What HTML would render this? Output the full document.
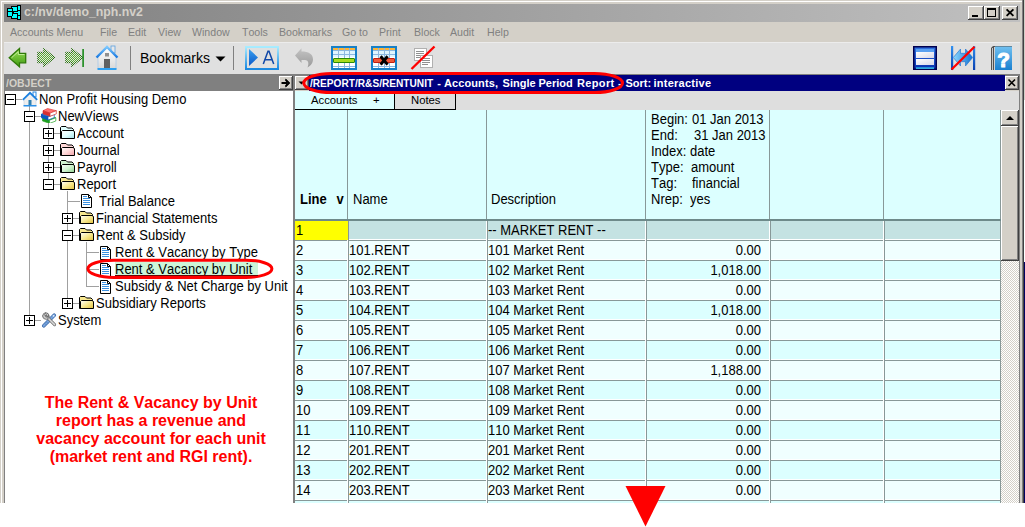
<!DOCTYPE html><html><head><meta charset="utf-8"><style>
html,body{margin:0;padding:0;}body{width:1025px;height:527px;overflow:hidden;position:relative;background:#fff;font-family:"Liberation Sans",sans-serif;font-kerning:none;}
body>div{position:absolute;}
</style></head><body>
<div style="left:0px;top:0px;width:1024px;height:503px;background:#d4d0c8"></div>
<div style="left:1px;top:1px;width:1021px;height:1px;background:#fff"></div>
<div style="left:1px;top:1px;width:1px;height:502px;background:#fff"></div>
<div style="left:1022px;top:0px;width:1px;height:503px;background:#808080"></div>
<div style="left:1023px;top:0px;width:1px;height:503px;background:#404040"></div>
<div style="left:1024px;top:0px;width:1px;height:100px;background:#d4d0c8"></div>
<div style="left:1024px;top:100px;width:1px;height:162px;background:#ffffff"></div>
<div style="left:1024px;top:262px;width:1px;height:241px;background:#000060"></div>
<div style="left:4px;top:4px;width:1016px;height:18px;background:linear-gradient(to right,#808080,#c0c0c0)"></div>
<svg style="position:absolute;left:7px;top:5px;" width="15" height="16" viewBox="0 0 15 16"><g shape-rendering="crispEdges"><rect x="0" y="3" width="6" height="4" fill="#000"/><rect x="0" y="6" width="6" height="6" fill="#000"/><rect x="4" y="1" width="7" height="3" fill="#000"/><rect x="5" y="2" width="6" height="5" fill="#000"/><rect x="5" y="8" width="6" height="4" fill="#000"/><rect x="4" y="10" width="7" height="4" fill="#000"/><rect x="10" y="0" width="4" height="6" fill="#000"/><rect x="10" y="5" width="4" height="6" fill="#000"/><rect x="6" y="6" width="6" height="3" fill="#000"/><rect x="10" y="10" width="4" height="5" fill="#000"/><rect x="1" y="4" width="4" height="2" fill="#00ffff"/><rect x="1" y="7" width="4" height="4" fill="#00ffff"/><rect x="5" y="2" width="5" height="1" fill="#00ffff"/><rect x="6" y="3" width="4" height="3" fill="#00ffff"/><rect x="6" y="9" width="4" height="2" fill="#00ffff"/><rect x="5" y="11" width="5" height="2" fill="#00ffff"/><rect x="11" y="1" width="2" height="4" fill="#00ffff"/><rect x="11" y="6" width="2" height="4" fill="#00ffff"/><rect x="7" y="7" width="4" height="1" fill="#00ffff"/><rect x="11" y="11" width="2" height="3" fill="#00ffff"/></g></svg>
<div style="left:24px;top:5.24px;line-height:15px;font-size:12.3px;font-weight:bold;color:#d4d0c8;white-space:pre;">c:/nv/demo_nph.nv2</div>
<div style="left:968px;top:6px;width:16px;height:14px;background:#d4d0c8;box-shadow:inset -1px -1px #404040, inset 1px 1px #ffffff, inset -2px -2px #808080, inset 2px 2px #d4d0c8;"></div>
<div style="left:984px;top:6px;width:16px;height:14px;background:#d4d0c8;box-shadow:inset -1px -1px #404040, inset 1px 1px #ffffff, inset -2px -2px #808080, inset 2px 2px #d4d0c8;"></div>
<div style="left:1002px;top:6px;width:16px;height:14px;background:#d4d0c8;box-shadow:inset -1px -1px #404040, inset 1px 1px #ffffff, inset -2px -2px #808080, inset 2px 2px #d4d0c8;"></div>
<svg style="position:absolute;left:968px;top:6px;" width="16" height="14" viewBox="0 0 16 14"><rect x="4" y="9" width="6" height="2" fill="#000"/></svg>
<svg style="position:absolute;left:984px;top:6px;" width="16" height="14" viewBox="0 0 16 14"><g shape-rendering="crispEdges" fill="#000"><rect x="3" y="2" width="9" height="2"/><rect x="3" y="2" width="1" height="9"/><rect x="11" y="2" width="1" height="9"/><rect x="3" y="10" width="9" height="1"/></g></svg>
<svg style="position:absolute;left:1002px;top:6px;" width="16" height="14" viewBox="0 0 16 14"><path d="M4.6 3.4 L11.4 9.9 M11.4 3.4 L4.6 9.9" stroke="#000" stroke-width="1.9"/></svg>
<div style="left:10px;top:25.83px;line-height:13px;font-size:10.6px;font-weight:normal;color:#808080;white-space:pre;">Accounts Menu</div>
<div style="left:100px;top:25.83px;line-height:13px;font-size:10.6px;font-weight:normal;color:#808080;white-space:pre;">File</div>
<div style="left:128px;top:25.83px;line-height:13px;font-size:10.6px;font-weight:normal;color:#808080;white-space:pre;">Edit</div>
<div style="left:158px;top:25.83px;line-height:13px;font-size:10.6px;font-weight:normal;color:#808080;white-space:pre;">View</div>
<div style="left:192px;top:25.83px;line-height:13px;font-size:10.6px;font-weight:normal;color:#808080;white-space:pre;">Window</div>
<div style="left:242px;top:25.83px;line-height:13px;font-size:10.6px;font-weight:normal;color:#808080;white-space:pre;">Tools</div>
<div style="left:279px;top:25.83px;line-height:13px;font-size:10.6px;font-weight:normal;color:#808080;white-space:pre;">Bookmarks</div>
<div style="left:342px;top:25.83px;line-height:13px;font-size:10.6px;font-weight:normal;color:#808080;white-space:pre;">Go to</div>
<div style="left:379px;top:25.83px;line-height:13px;font-size:10.6px;font-weight:normal;color:#808080;white-space:pre;">Print</div>
<div style="left:414px;top:25.83px;line-height:13px;font-size:10.6px;font-weight:normal;color:#808080;white-space:pre;">Block</div>
<div style="left:450px;top:25.83px;line-height:13px;font-size:10.6px;font-weight:normal;color:#808080;white-space:pre;">Audit</div>
<div style="left:487px;top:25.83px;line-height:13px;font-size:10.6px;font-weight:normal;color:#808080;white-space:pre;">Help</div>
<div style="left:4px;top:42px;width:1016px;height:32px;background:#e0e0e0"></div>
<div style="left:4px;top:42px;width:1016px;height:1px;background:#ececec"></div>
<svg style="position:absolute;left:8px;top:47px;" width="20" height="22" viewBox="0 0 20 22"><defs><linearGradient id="gb" x1="0" y1="0" x2="0" y2="1"><stop offset="0" stop-color="#9be05a"/><stop offset="1" stop-color="#3f9a10"/></linearGradient></defs>
<path d="M1.2 10.8 L11.5 1.5 L11.5 6.3 L17.7 6.3 L17.7 15.8 L11.5 15.8 L11.5 19.8 Z" fill="url(#gb)" stroke="#2f7a08" stroke-width="1.3" stroke-linejoin="miter"/>
<path d="M3.5 10.8 L10.3 4.6 L10.3 7.5 L16.4 7.5" fill="none" stroke="#c6f0a0" stroke-width="0.9"/></svg>
<svg style="position:absolute;left:37px;top:48px;" width="20" height="20" viewBox="0 0 20 20"><defs><pattern id="dp1" width="2" height="2" patternUnits="userSpaceOnUse"><rect x="0" y="0" width="1" height="1" fill="#58b030"/><rect x="1" y="1" width="1" height="1" fill="#58b030"/></pattern>
<pattern id="do1" width="2" height="2" patternUnits="userSpaceOnUse"><rect x="0" y="0" width="1" height="1" fill="#2a7010"/><rect x="1" y="1" width="1" height="1" fill="#2a7010"/></pattern></defs><path d="M1 4.5 L7 4.5 L7 1 L17.5 9.5 L7 18 L7 14.5 L1 14.5 Z" fill="url(#dp1)" stroke="url(#do1)" stroke-width="1.6"/></svg>
<svg style="position:absolute;left:65px;top:48px;" width="20" height="20" viewBox="0 0 20 20"><defs><pattern id="dp2" width="2" height="2" patternUnits="userSpaceOnUse"><rect x="0" y="0" width="1" height="1" fill="#58b030"/><rect x="1" y="1" width="1" height="1" fill="#58b030"/></pattern>
<pattern id="do2" width="2" height="2" patternUnits="userSpaceOnUse"><rect x="0" y="0" width="1" height="1" fill="#2a7010"/><rect x="1" y="1" width="1" height="1" fill="#2a7010"/></pattern></defs><path d="M1 4.5 L7 4.5 L7 1 L17.5 9.5 L7 18 L7 14.5 L1 14.5 Z" fill="url(#dp2)" stroke="url(#do2)" stroke-width="1.6"/><rect x="17.3" y="1" width="1.6" height="18" fill="#1a8a1a"/></svg>
<svg style="position:absolute;left:95px;top:45px;" width="24" height="26" viewBox="0 0 24 26"><defs><linearGradient id="hb" x1="0" y1="0" x2="0" y2="1"><stop offset="0" stop-color="#ffffff"/><stop offset="1" stop-color="#d8d8d8"/></linearGradient>
<linearGradient id="hr" x1="0" y1="0" x2="0" y2="1"><stop offset="0" stop-color="#7cc8ff"/><stop offset="1" stop-color="#1878e0"/></linearGradient></defs>
<rect x="16" y="1" width="4" height="7" fill="#e8e8e8" stroke="#5aa0e0" stroke-width="0.8"/>
<path d="M3 12 L12 3 L21 12 L21 24 L3 24 Z" fill="url(#hb)" stroke="#a8c8e8" stroke-width="0.8"/>
<path d="M1.5 12.5 L12 2 L22.5 12.5" fill="none" stroke="url(#hr)" stroke-width="2.4"/>
<rect x="10" y="8" width="4" height="3.5" fill="#909090"/>
<rect x="9" y="14" width="6" height="10" fill="#606060"/>
<rect x="2.5" y="23" width="19" height="2" fill="#30a0f0"/></svg>
<div style="left:130px;top:46px;width:1px;height:24px;background:#808080"></div>
<div style="left:233px;top:46px;width:1px;height:24px;background:#808080"></div>
<div style="left:140px;top:49.65px;line-height:17px;font-size:14px;font-weight:normal;color:#000;white-space:pre;">Bookmarks</div>
<svg style="position:absolute;left:215px;top:56px;" width="11" height="6" viewBox="0 0 11 6"><path d="M0.5 0.5 L10.5 0.5 L5.5 5.5 Z" fill="#000"/></svg>
<svg style="position:absolute;left:244px;top:45px;" width="37" height="26" viewBox="0 0 37 26"><defs><linearGradient id="ab" x1="0" y1="0" x2="0" y2="1"><stop offset="0" stop-color="#a8ecff"/><stop offset="1" stop-color="#1a88e0"/></linearGradient>
<linearGradient id="at" x1="0" y1="0" x2="0" y2="1"><stop offset="0" stop-color="#3aa0f0"/><stop offset="1" stop-color="#0a58c8"/></linearGradient></defs>
<rect x="2" y="2" width="32" height="22" fill="#e0e0e0" stroke="url(#ab)" stroke-width="2"/>
<path d="M5 4 L14 12.5 L5 21 Z" fill="url(#at)"/>
<path d="M19.3 19 L24 6.2 L25 6.2 L29.7 19 M20.8 14.8 L28.2 14.8" fill="none" stroke="#1048a8" stroke-width="1.5"/></svg>
<svg style="position:absolute;left:293px;top:47px;" width="22" height="22" viewBox="0 0 22 22"><defs><linearGradient id="ug" x1="0" y1="0" x2="0" y2="1"><stop offset="0" stop-color="#c4c4c4"/><stop offset="1" stop-color="#9a9a9a"/></linearGradient></defs>
<path d="M2 8.5 L8.5 1.3 L8.5 4.6 C15.5 4.6 20 7 20 12.5 C20 16 17.5 19 14.5 20.5 C16 17 15.8 13.3 12 13 L8.5 13 L8.5 16 Z" fill="url(#ug)"/></svg>
<svg style="position:absolute;left:331px;top:46px;" width="26" height="24" viewBox="0 0 26 24"><rect x="1" y="1" width="24" height="22" fill="#fff" stroke="#1680c8" stroke-width="2"/>
<rect x="2" y="2" width="22" height="2" fill="#fbb43a"/>
<rect x="2" y="4" width="22" height="7" fill="#e0f6ff"/>
<g fill="#8cb8e0"><rect x="7" y="2" width="1" height="20"/><rect x="13" y="2" width="1" height="20"/><rect x="18" y="2" width="1" height="20"/>
<rect x="2" y="4" width="22" height="1"/><rect x="2" y="8" width="22" height="1"/><rect x="2" y="20" width="22" height="1"/></g><rect x="2.5" y="12.5" width="21" height="4" rx="0.5" fill="#a8dc20" stroke="#2a8a08" stroke-width="1"/></svg>
<svg style="position:absolute;left:371px;top:46px;" width="26" height="24" viewBox="0 0 26 24"><rect x="1" y="1" width="24" height="22" fill="#fff" stroke="#1680c8" stroke-width="2"/>
<rect x="2" y="2" width="22" height="2" fill="#fbb43a"/>
<rect x="2" y="4" width="22" height="7" fill="#e0f6ff"/>
<g fill="#8cb8e0"><rect x="7" y="2" width="1" height="20"/><rect x="13" y="2" width="1" height="20"/><rect x="18" y="2" width="1" height="20"/>
<rect x="2" y="4" width="22" height="1"/><rect x="2" y="8" width="22" height="1"/><rect x="2" y="20" width="22" height="1"/></g><rect x="2.5" y="12.5" width="21" height="4" rx="0.5" fill="#f05838" stroke="#c02010" stroke-width="1"/><path d="M9.6 10.3 L16.6 18.6 M16.6 10.3 L9.6 18.6" stroke="#000" stroke-width="3"/></svg>
<svg style="position:absolute;left:410px;top:45px;" width="26" height="26" viewBox="0 0 26 26"><rect x="4.5" y="3.5" width="12" height="12" fill="#fff" stroke="#b0b0b0"/>
<g fill="#909090"><rect x="6" y="6" width="8" height="1"/><rect x="6" y="8" width="8" height="1"/><rect x="6" y="10" width="8" height="1"/><rect x="6" y="12" width="6" height="1"/></g>
<rect x="10.5" y="10.5" width="12" height="12" fill="#fff" stroke="#b0b0b0"/>
<g fill="#909090"><rect x="12" y="13" width="8" height="1"/><rect x="12" y="15" width="8" height="1"/><rect x="12" y="17" width="8" height="1"/><rect x="12" y="19" width="6" height="1"/></g>
<path d="M1.5 24 L24.5 1.5" stroke="#ff0000" stroke-width="2.4"/></svg>
<svg style="position:absolute;left:913px;top:46px;" width="25" height="25" viewBox="0 0 25 25"><defs><linearGradient id="wg" x1="0" y1="0" x2="0" y2="1"><stop offset="0" stop-color="#3070e0"/><stop offset="1" stop-color="#0830b0"/></linearGradient>
<linearGradient id="wp" x1="0" y1="0" x2="1" y2="1"><stop offset="0" stop-color="#ffffff"/><stop offset="1" stop-color="#d8d8e8"/></linearGradient></defs>
<rect x="0" y="0" width="24" height="24" fill="#000050"/>
<rect x="1.5" y="1.5" width="21" height="21" fill="url(#wg)"/>
<rect x="3" y="3" width="18" height="3" fill="#5aa0f0"/>
<rect x="3" y="6" width="18" height="6" fill="url(#wp)"/>
<rect x="3" y="13" width="18" height="6" fill="url(#wp)"/>
<rect x="3" y="21.5" width="18" height="1.2" fill="#40e8ff"/></svg>
<svg style="position:absolute;left:950px;top:46px;" width="26" height="25" viewBox="0 0 26 25"><defs><linearGradient id="ar" x1="0" y1="0" x2="1" y2="0"><stop offset="0" stop-color="#8cd8ff"/><stop offset="1" stop-color="#1070d0"/></linearGradient>
<linearGradient id="bv" x1="0" y1="0" x2="0" y2="1"><stop offset="0" stop-color="#3090f0"/><stop offset="1" stop-color="#0a40b0"/></linearGradient></defs>
<rect x="1" y="0" width="2.2" height="24" fill="url(#bv)"/>
<rect x="23" y="0" width="2.2" height="24" fill="url(#bv)"/>
<path d="M3.3 11.5 L10.5 3 L10.5 7.3 L15.5 7.3 L15.5 3 L22.7 11.5 L15.5 20 L15.5 15.7 L10.5 15.7 L10.5 20 Z" fill="url(#ar)" stroke="#1a70d0" stroke-width="0.6"/>
<path d="M1.5 23.5 L24.5 0.8" stroke="#ff0000" stroke-width="2.3"/></svg>
<svg style="position:absolute;left:990px;top:46px;" width="23" height="25" viewBox="0 0 23 25"><defs><linearGradient id="hbk" x1="0" y1="0" x2="0" y2="1"><stop offset="0" stop-color="#70c0f0"/><stop offset="1" stop-color="#1a80d0"/></linearGradient></defs>
<path d="M1 2 L3 0 L22 0 L22 24 L1 24 Z" fill="#505050"/>
<rect x="2" y="2" width="1" height="22" fill="#c8c8c8"/>
<rect x="4" y="1" width="1" height="23" fill="#d0d0d0"/>
<rect x="5" y="0.5" width="17" height="23.5" fill="url(#hbk)"/>
<text x="13.6" y="20.8" text-anchor="middle" font-family="Liberation Sans" font-weight="bold" font-size="20.5" fill="#fff" stroke="#fff" stroke-width="1.2">?</text></svg>
<div style="left:4px;top:74px;width:289px;height:17px;background:#808080"></div>
<div style="left:5.5px;top:76.69px;line-height:13px;font-size:11px;font-weight:bold;color:#d4d0c8;white-space:pre;transform:scaleX(0.95);transform-origin:0 0;">/OBJECT</div>
<div style="left:279px;top:76px;width:14px;height:14px;background:#d4d0c8;box-shadow:inset -1px -1px #404040, inset 1px 1px #ffffff, inset -2px -2px #808080, inset 2px 2px #d4d0c8;"></div>
<svg style="position:absolute;left:279px;top:76px;" width="14" height="14" viewBox="0 0 14 14"><path d="M2.5 7 L8 7" stroke="#000" stroke-width="2"/><path d="M6.5 2.5 L11 7 L6.5 11.5 L6.5 9 L8.5 7 L6.5 5 Z" fill="#000"/><path d="M6.5 3.5 L10 7 L6.5 10.5" stroke="#000" stroke-width="1.6" fill="none"/></svg>
<div style="left:4px;top:91px;width:1px;height:412px;background:#808080"></div>
<div style="left:5px;top:91px;width:288px;height:412px;background:#fff"></div>
<div style="left:293px;top:74px;width:2px;height:429px;background:#808080"></div>
<div style="left:29px;top:106px;width:1px;height:215px;background:#a0a0a0"></div>
<div style="left:48px;top:123px;width:1px;height:62px;background:#a0a0a0"></div>
<div style="left:67px;top:191px;width:1px;height:113px;background:#a0a0a0"></div>
<div style="left:86px;top:242px;width:1px;height:45px;background:#a0a0a0"></div>
<div style="left:16px;top:99px;width:6px;height:1px;background:#a0a0a0"></div>
<div style="left:35px;top:116px;width:6px;height:1px;background:#a0a0a0"></div>
<div style="left:35px;top:320px;width:6px;height:1px;background:#a0a0a0"></div>
<div style="left:54px;top:133px;width:6px;height:1px;background:#a0a0a0"></div>
<div style="left:54px;top:150px;width:6px;height:1px;background:#a0a0a0"></div>
<div style="left:54px;top:167px;width:6px;height:1px;background:#a0a0a0"></div>
<div style="left:54px;top:184px;width:6px;height:1px;background:#a0a0a0"></div>
<div style="left:68px;top:201px;width:12px;height:1px;background:#a0a0a0"></div>
<div style="left:73px;top:218px;width:6px;height:1px;background:#a0a0a0"></div>
<div style="left:73px;top:235px;width:6px;height:1px;background:#a0a0a0"></div>
<div style="left:73px;top:303px;width:6px;height:1px;background:#a0a0a0"></div>
<div style="left:87px;top:252px;width:12px;height:1px;background:#a0a0a0"></div>
<div style="left:87px;top:269px;width:12px;height:1px;background:#a0a0a0"></div>
<div style="left:87px;top:286px;width:12px;height:1px;background:#a0a0a0"></div>
<svg style="position:absolute;left:5px;top:94px;" width="11" height="11" viewBox="0 0 11 11"><rect x="0.5" y="0.5" width="10" height="10" fill="#fff" stroke="#000"/><rect x="2" y="5" width="7" height="1" fill="#000"/></svg>
<svg style="position:absolute;left:22px;top:91px;" width="17" height="16" viewBox="0 0 17 16"><rect x="11" y="1" width="3" height="5" fill="#fff" stroke="#2a88e0" stroke-width="1"/>
<path d="M2 8 L8 2.5 L14 8 L14 14.5 L2 14.5 Z" fill="#eee" stroke="#c0d0e0" stroke-width="0.6"/>
<path d="M0.8 8.8 L8 1.8 L15.2 8.8" fill="none" stroke="#1a80e0" stroke-width="1.8"/>
<rect x="6.5" y="9" width="3" height="5.5" fill="#3080b0"/>
<rect x="1.5" y="14" width="13" height="1.5" fill="#2a90e8"/></svg>
<div style="left:39px;top:91.50px;line-height:16px;font-size:13px;font-weight:normal;color:#000;white-space:pre;transform:scaleY(1.08);transform-origin:0 12.50px;">Non Profit Housing Demo</div>
<svg style="position:absolute;left:24px;top:111px;" width="11" height="11" viewBox="0 0 11 11"><rect x="0.5" y="0.5" width="10" height="10" fill="#fff" stroke="#000"/><rect x="2" y="5" width="7" height="1" fill="#000"/></svg>
<svg style="position:absolute;left:41px;top:108px;" width="16" height="15" viewBox="0 0 16 15"><path d="M1.5 9.8 L6.0 7.6 L14.8 9.8 L8.5 12.2 Z" fill="#50e050" stroke="#20a020" stroke-width="0.6"/><path d="M1.5 9.8 L8.5 12.2 L8.5 15.4 L1.5 13.0 Z" fill="#20a020" stroke="#20a020" stroke-width="0.6"/><path d="M8.5 12.2 L14.8 9.8 L14.8 13.0 L8.5 15.4 Z" fill="#fff" stroke="#20a020" stroke-width="0.7"/><path d="M0.0 6.4 L4.5 4.2 L13.3 6.4 L7.0 8.8 Z" fill="#2a80f0" stroke="#0a58c0" stroke-width="0.6"/><path d="M0.0 6.4 L7.0 8.8 L7.0 12.0 L0.0 9.6 Z" fill="#0a58c0" stroke="#0a58c0" stroke-width="0.6"/><path d="M7.0 8.8 L13.3 6.4 L13.3 9.6 L7.0 12.0 Z" fill="#fff" stroke="#0a58c0" stroke-width="0.7"/><path d="M2.0 2.7 L6.5 0.5 L15.3 2.7 L9.0 5.1 Z" fill="#ff7070" stroke="#d83030" stroke-width="0.6"/><path d="M2.0 2.7 L9.0 5.1 L9.0 8.3 L2.0 5.9 Z" fill="#d83030" stroke="#d83030" stroke-width="0.6"/><path d="M9.0 5.1 L15.3 2.7 L15.3 5.9 L9.0 8.3 Z" fill="#fff" stroke="#d83030" stroke-width="0.7"/></svg>
<div style="left:58px;top:108.50px;line-height:16px;font-size:13px;font-weight:normal;color:#000;white-space:pre;transform:scaleY(1.08);transform-origin:0 12.50px;">NewViews</div>
<svg style="position:absolute;left:43px;top:128px;" width="11" height="11" viewBox="0 0 11 11"><rect x="0.5" y="0.5" width="10" height="10" fill="#fff" stroke="#000"/><rect x="2" y="5" width="7" height="1" fill="#000"/><rect x="5" y="2" width="1" height="7" fill="#000"/></svg>
<svg style="position:absolute;left:60px;top:126px;" width="15" height="13" viewBox="0 0 15 13"><defs><linearGradient id="f60126" x1="0" y1="0" x2="1" y2="1"><stop offset="0" stop-color="#fff"/><stop offset="0.5" stop-color="#e0ffff"/><stop offset="1" stop-color="#a0e0e8"/></linearGradient></defs>
<path d="M0.5 1.5 L1.5 0.5 L6 0.5 L7.5 2 L12 2 L13.5 3.5 L13.5 12.5 L0.5 12.5 Z" fill="#e0ffff" stroke="#000" stroke-width="1"/>
<path d="M2.5 4.5 L13 4.5 L14.5 5.5 L14.5 12.5 L1.5 12.5 L1.5 5.5 Z" fill="url(#f60126)" stroke="#000" stroke-width="1"/></svg>
<div style="left:77px;top:125.50px;line-height:16px;font-size:13px;font-weight:normal;color:#000;white-space:pre;transform:scaleY(1.08);transform-origin:0 12.50px;">Account</div>
<svg style="position:absolute;left:43px;top:145px;" width="11" height="11" viewBox="0 0 11 11"><rect x="0.5" y="0.5" width="10" height="10" fill="#fff" stroke="#000"/><rect x="2" y="5" width="7" height="1" fill="#000"/><rect x="5" y="2" width="1" height="7" fill="#000"/></svg>
<svg style="position:absolute;left:60px;top:143px;" width="15" height="13" viewBox="0 0 15 13"><defs><linearGradient id="f60143" x1="0" y1="0" x2="1" y2="1"><stop offset="0" stop-color="#fff"/><stop offset="0.5" stop-color="#ffd8d8"/><stop offset="1" stop-color="#f0a0a8"/></linearGradient></defs>
<path d="M0.5 1.5 L1.5 0.5 L6 0.5 L7.5 2 L12 2 L13.5 3.5 L13.5 12.5 L0.5 12.5 Z" fill="#ffd8d8" stroke="#000" stroke-width="1"/>
<path d="M2.5 4.5 L13 4.5 L14.5 5.5 L14.5 12.5 L1.5 12.5 L1.5 5.5 Z" fill="url(#f60143)" stroke="#000" stroke-width="1"/></svg>
<div style="left:77px;top:142.50px;line-height:16px;font-size:13px;font-weight:normal;color:#000;white-space:pre;transform:scaleY(1.08);transform-origin:0 12.50px;">Journal</div>
<svg style="position:absolute;left:43px;top:162px;" width="11" height="11" viewBox="0 0 11 11"><rect x="0.5" y="0.5" width="10" height="10" fill="#fff" stroke="#000"/><rect x="2" y="5" width="7" height="1" fill="#000"/><rect x="5" y="2" width="1" height="7" fill="#000"/></svg>
<svg style="position:absolute;left:60px;top:160px;" width="15" height="13" viewBox="0 0 15 13"><defs><linearGradient id="f60160" x1="0" y1="0" x2="1" y2="1"><stop offset="0" stop-color="#fff"/><stop offset="0.5" stop-color="#d0f4d0"/><stop offset="1" stop-color="#90d090"/></linearGradient></defs>
<path d="M0.5 1.5 L1.5 0.5 L6 0.5 L7.5 2 L12 2 L13.5 3.5 L13.5 12.5 L0.5 12.5 Z" fill="#d0f4d0" stroke="#000" stroke-width="1"/>
<path d="M2.5 4.5 L13 4.5 L14.5 5.5 L14.5 12.5 L1.5 12.5 L1.5 5.5 Z" fill="url(#f60160)" stroke="#000" stroke-width="1"/></svg>
<div style="left:77px;top:159.50px;line-height:16px;font-size:13px;font-weight:normal;color:#000;white-space:pre;transform:scaleY(1.08);transform-origin:0 12.50px;">Payroll</div>
<svg style="position:absolute;left:43px;top:179px;" width="11" height="11" viewBox="0 0 11 11"><rect x="0.5" y="0.5" width="10" height="10" fill="#fff" stroke="#000"/><rect x="2" y="5" width="7" height="1" fill="#000"/></svg>
<svg style="position:absolute;left:60px;top:177px;" width="15" height="13" viewBox="0 0 15 13"><defs><linearGradient id="f60177" x1="0" y1="0" x2="1" y2="1"><stop offset="0" stop-color="#fff"/><stop offset="0.5" stop-color="#f8e890"/><stop offset="1" stop-color="#e0c040"/></linearGradient></defs>
<path d="M0.5 1.5 L1.5 0.5 L6 0.5 L7.5 2 L12 2 L13.5 3.5 L13.5 12.5 L0.5 12.5 Z" fill="#f8e890" stroke="#000" stroke-width="1"/>
<path d="M2.5 4.5 L13 4.5 L14.5 5.5 L14.5 12.5 L1.5 12.5 L1.5 5.5 Z" fill="url(#f60177)" stroke="#000" stroke-width="1"/></svg>
<div style="left:77px;top:176.50px;line-height:16px;font-size:13px;font-weight:normal;color:#000;white-space:pre;transform:scaleY(1.08);transform-origin:0 12.50px;">Report</div>
<svg style="position:absolute;left:81px;top:194px;" width="11" height="14" viewBox="0 0 11 14"><path d="M0.5 0.5 L7.5 0.5 L10.5 3.5 L10.5 13.5 L0.5 13.5 Z" fill="#fff" stroke="#000"/>
<path d="M7.5 0.5 L7.5 3.5 L10.5 3.5" fill="none" stroke="#000"/>
<g fill="#3a90e0"><rect x="2" y="2" width="4" height="1"/><rect x="2" y="4" width="7" height="1"/><rect x="2" y="6" width="7" height="1"/><rect x="2" y="8" width="7" height="1"/><rect x="2" y="10" width="7" height="1"/></g></svg>
<div style="left:99px;top:193.50px;line-height:16px;font-size:13px;font-weight:normal;color:#000;white-space:pre;transform:scaleY(1.08);transform-origin:0 12.50px;">Trial Balance</div>
<svg style="position:absolute;left:62px;top:213px;" width="11" height="11" viewBox="0 0 11 11"><rect x="0.5" y="0.5" width="10" height="10" fill="#fff" stroke="#000"/><rect x="2" y="5" width="7" height="1" fill="#000"/><rect x="5" y="2" width="1" height="7" fill="#000"/></svg>
<svg style="position:absolute;left:79px;top:211px;" width="15" height="13" viewBox="0 0 15 13"><defs><linearGradient id="f79211" x1="0" y1="0" x2="1" y2="1"><stop offset="0" stop-color="#fff"/><stop offset="0.5" stop-color="#f8e890"/><stop offset="1" stop-color="#e0c040"/></linearGradient></defs>
<path d="M0.5 1.5 L1.5 0.5 L6 0.5 L7.5 2 L12 2 L13.5 3.5 L13.5 12.5 L0.5 12.5 Z" fill="#f8e890" stroke="#000" stroke-width="1"/>
<path d="M2.5 4.5 L13 4.5 L14.5 5.5 L14.5 12.5 L1.5 12.5 L1.5 5.5 Z" fill="url(#f79211)" stroke="#000" stroke-width="1"/></svg>
<div style="left:96px;top:210.50px;line-height:16px;font-size:13px;font-weight:normal;color:#000;white-space:pre;transform:scaleY(1.08);transform-origin:0 12.50px;">Financial Statements</div>
<svg style="position:absolute;left:62px;top:230px;" width="11" height="11" viewBox="0 0 11 11"><rect x="0.5" y="0.5" width="10" height="10" fill="#fff" stroke="#000"/><rect x="2" y="5" width="7" height="1" fill="#000"/></svg>
<svg style="position:absolute;left:79px;top:228px;" width="15" height="13" viewBox="0 0 15 13"><defs><linearGradient id="f79228" x1="0" y1="0" x2="1" y2="1"><stop offset="0" stop-color="#fff"/><stop offset="0.5" stop-color="#f8e890"/><stop offset="1" stop-color="#e0c040"/></linearGradient></defs>
<path d="M0.5 1.5 L1.5 0.5 L6 0.5 L7.5 2 L12 2 L13.5 3.5 L13.5 12.5 L0.5 12.5 Z" fill="#f8e890" stroke="#000" stroke-width="1"/>
<path d="M2.5 4.5 L13 4.5 L14.5 5.5 L14.5 12.5 L1.5 12.5 L1.5 5.5 Z" fill="url(#f79228)" stroke="#000" stroke-width="1"/></svg>
<div style="left:96px;top:227.50px;line-height:16px;font-size:13px;font-weight:normal;color:#000;white-space:pre;transform:scaleY(1.08);transform-origin:0 12.50px;">Rent &amp; Subsidy</div>
<svg style="position:absolute;left:62px;top:298px;" width="11" height="11" viewBox="0 0 11 11"><rect x="0.5" y="0.5" width="10" height="10" fill="#fff" stroke="#000"/><rect x="2" y="5" width="7" height="1" fill="#000"/><rect x="5" y="2" width="1" height="7" fill="#000"/></svg>
<svg style="position:absolute;left:79px;top:296px;" width="15" height="13" viewBox="0 0 15 13"><defs><linearGradient id="f79296" x1="0" y1="0" x2="1" y2="1"><stop offset="0" stop-color="#fff"/><stop offset="0.5" stop-color="#f8e890"/><stop offset="1" stop-color="#e0c040"/></linearGradient></defs>
<path d="M0.5 1.5 L1.5 0.5 L6 0.5 L7.5 2 L12 2 L13.5 3.5 L13.5 12.5 L0.5 12.5 Z" fill="#f8e890" stroke="#000" stroke-width="1"/>
<path d="M2.5 4.5 L13 4.5 L14.5 5.5 L14.5 12.5 L1.5 12.5 L1.5 5.5 Z" fill="url(#f79296)" stroke="#000" stroke-width="1"/></svg>
<div style="left:96px;top:295.50px;line-height:16px;font-size:13px;font-weight:normal;color:#000;white-space:pre;transform:scaleY(1.08);transform-origin:0 12.50px;">Subsidiary Reports</div>
<svg style="position:absolute;left:100px;top:246px;" width="11" height="14" viewBox="0 0 11 14"><path d="M0.5 0.5 L7.5 0.5 L10.5 3.5 L10.5 13.5 L0.5 13.5 Z" fill="#fff" stroke="#000"/>
<path d="M7.5 0.5 L7.5 3.5 L10.5 3.5" fill="none" stroke="#000"/>
<g fill="#3a90e0"><rect x="2" y="2" width="4" height="1"/><rect x="2" y="4" width="7" height="1"/><rect x="2" y="6" width="7" height="1"/><rect x="2" y="8" width="7" height="1"/><rect x="2" y="10" width="7" height="1"/></g></svg>
<div style="left:115px;top:244.50px;line-height:16px;font-size:13px;font-weight:normal;color:#000;white-space:pre;transform:scaleY(1.08);transform-origin:0 12.50px;">Rent &amp; Vacancy by Type</div>
<svg style="position:absolute;left:100px;top:263px;" width="11" height="14" viewBox="0 0 11 14"><path d="M0.5 0.5 L7.5 0.5 L10.5 3.5 L10.5 13.5 L0.5 13.5 Z" fill="#fff" stroke="#000"/>
<path d="M7.5 0.5 L7.5 3.5 L10.5 3.5" fill="none" stroke="#000"/>
<g fill="#3a90e0"><rect x="2" y="2" width="4" height="1"/><rect x="2" y="4" width="7" height="1"/><rect x="2" y="6" width="7" height="1"/><rect x="2" y="8" width="7" height="1"/><rect x="2" y="10" width="7" height="1"/></g></svg>
<div style="left:115px;top:262px;width:143px;height:14px;background:#ccf5d8"></div>
<div style="left:115px;top:261.50px;line-height:16px;font-size:13px;font-weight:normal;color:#000;white-space:pre;transform:scaleY(1.08);transform-origin:0 12.50px;">Rent &amp; Vacancy by Unit</div>
<svg style="position:absolute;left:100px;top:280px;" width="11" height="14" viewBox="0 0 11 14"><path d="M0.5 0.5 L7.5 0.5 L10.5 3.5 L10.5 13.5 L0.5 13.5 Z" fill="#fff" stroke="#000"/>
<path d="M7.5 0.5 L7.5 3.5 L10.5 3.5" fill="none" stroke="#000"/>
<g fill="#3a90e0"><rect x="2" y="2" width="4" height="1"/><rect x="2" y="4" width="7" height="1"/><rect x="2" y="6" width="7" height="1"/><rect x="2" y="8" width="7" height="1"/><rect x="2" y="10" width="7" height="1"/></g></svg>
<div style="left:115px;top:278.50px;line-height:16px;font-size:13px;font-weight:normal;color:#000;white-space:pre;transform:scaleY(1.08);transform-origin:0 12.50px;">Subsidy &amp; Net Charge by Unit</div>
<svg style="position:absolute;left:24px;top:315px;" width="11" height="11" viewBox="0 0 11 11"><rect x="0.5" y="0.5" width="10" height="10" fill="#fff" stroke="#000"/><rect x="2" y="5" width="7" height="1" fill="#000"/><rect x="5" y="2" width="1" height="7" fill="#000"/></svg>
<svg style="position:absolute;left:41px;top:311px;" width="16" height="17" viewBox="0 0 16 17"><path d="M2.8 14.8 L13.2 4.2" stroke="#3a68a8" stroke-width="3.6" stroke-linecap="round"/>
<path d="M2.8 14.8 L13.2 4.2" stroke="#78a4dc" stroke-width="2.2" stroke-linecap="round"/>
<path d="M4 12.5 L5.5 14 M5.5 11 L7 12.5" stroke="#4a78b8" stroke-width="0.8"/>
<circle cx="12.6" cy="4.8" r="0.9" fill="#e8f0ff"/>
<path d="M5.2 5.2 L13.6 13.6" stroke="#6a6a6a" stroke-width="3" stroke-linecap="round"/>
<path d="M5.2 5.2 L13.6 13.6" stroke="#d8d8d8" stroke-width="1.5" stroke-linecap="round"/>
<path d="M2.2 6.5 A3.3 3.3 0 0 1 6.5 2.2 L5 3.8 L5.8 5.8 L7.8 5 L6.5 2.2 M6.5 2.2 A3.3 3.3 0 0 1 7.8 5" fill="none" stroke="#6a6a6a" stroke-width="0.9"/>
<path d="M1.6 5 A3.8 3.8 0 0 1 5 1.6 L3.6 3.6 L4.6 5.6 L6.4 6.4 L8.4 5 A3.8 3.8 0 0 1 5.5 8.4 A3.8 3.8 0 0 1 1.6 5 Z" fill="#c8c8c8" stroke="#6a6a6a" stroke-width="0.8"/></svg>
<div style="left:58px;top:312.50px;line-height:16px;font-size:13px;font-weight:normal;color:#000;white-space:pre;transform:scaleY(1.08);transform-origin:0 12.50px;">System</div>
<div style="left:0px;width:302px;text-align:center;top:394.00px;line-height:18px;font-size:16px;font-weight:bold;color:#ff0000;white-space:pre;">The Rent &amp; Vacancy by Unit</div>
<div style="left:0px;width:302px;text-align:center;top:412.00px;line-height:18px;font-size:16px;font-weight:bold;color:#ff0000;white-space:pre;">report has a revenue and</div>
<div style="left:0px;width:302px;text-align:center;top:430.00px;line-height:18px;font-size:16px;font-weight:bold;color:#ff0000;white-space:pre;">vacancy account for each unit</div>
<div style="left:0px;width:302px;text-align:center;top:448.00px;line-height:18px;font-size:16px;font-weight:bold;color:#ff0000;white-space:pre;">(market rent and RGI rent).</div>
<div style="left:295px;top:74px;width:725px;height:2px;background:#808080"></div>
<div style="left:1019px;top:74px;width:1px;height:429px;background:#808080"></div>
<div style="left:309px;top:75px;width:696px;height:16px;background:#000080"></div>
<div style="left:295px;top:76px;width:14px;height:14px;background:#d4d0c8;box-shadow:inset -1px -1px #404040, inset 1px 1px #ffffff, inset -2px -2px #808080, inset 2px 2px #d4d0c8;"></div>
<svg style="position:absolute;left:295px;top:76px;" width="14" height="14" viewBox="0 0 14 14"><path d="M3.5 5.5 L9.5 5.5 L6.5 8.5 Z" fill="#000"/></svg>
<div style="left:309.5px;top:76.69px;line-height:13px;font-size:11px;font-weight:bold;color:#fff;white-space:pre;transform:scaleX(0.92);transform-origin:0 0;">/REPORT/R&amp;S/RENTUNIT</div>
<div style="left:437.3px;top:76.69px;line-height:13px;font-size:11px;font-weight:bold;color:#fff;white-space:pre;letter-spacing:0px;">-</div>
<div style="left:444px;top:76.69px;line-height:13px;font-size:11px;font-weight:bold;color:#fff;white-space:pre;letter-spacing:0.1px;">Accounts,</div>
<div style="left:502.6px;top:76.69px;line-height:13px;font-size:11px;font-weight:bold;color:#fff;white-space:pre;letter-spacing:0px;">Single</div>
<div style="left:538.5px;top:76.69px;line-height:13px;font-size:11px;font-weight:bold;color:#fff;white-space:pre;letter-spacing:0px;">Period</div>
<div style="left:577px;top:76.69px;line-height:13px;font-size:11px;font-weight:bold;color:#fff;white-space:pre;letter-spacing:0.35px;">Report</div>
<div style="left:618px;top:76.69px;line-height:13px;font-size:11px;font-weight:bold;color:#fff;white-space:pre;letter-spacing:0px;">-</div>
<div style="left:625.5px;top:76.69px;line-height:13px;font-size:11px;font-weight:bold;color:#fff;white-space:pre;letter-spacing:0px;">Sort:</div>
<div style="left:653.5px;top:76.69px;line-height:13px;font-size:11px;font-weight:bold;color:#fff;white-space:pre;letter-spacing:0.25px;">interactive</div>
<div style="left:1005px;top:76px;width:14px;height:14px;background:#d4d0c8;box-shadow:inset -1px -1px #404040, inset 1px 1px #ffffff, inset -2px -2px #808080, inset 2px 2px #d4d0c8;"></div>
<svg style="position:absolute;left:1005px;top:76px;" width="14" height="14" viewBox="0 0 14 14"><path d="M3.5 3.5 L10 10 M10 3.5 L3.5 10" stroke="#000" stroke-width="1.6"/></svg>
<div style="left:295px;top:91px;width:724px;height:19px;background:#dedede"></div>
<div style="left:295px;top:91px;width:99px;height:18px;background:#dcffff"></div>
<div style="left:394px;top:91px;width:1px;height:19px;background:#000"></div>
<div style="left:455px;top:91px;width:1px;height:19px;background:#000"></div>
<div style="left:295px;top:109px;width:161px;height:1px;background:#000"></div>
<div style="left:311px;top:93.08px;line-height:14px;font-size:11.3px;font-weight:normal;color:#000;white-space:pre;">Accounts</div>
<div style="left:373px;top:93.08px;line-height:14px;font-size:11.3px;font-weight:normal;color:#000;white-space:pre;">+</div>
<div style="left:411px;top:93.08px;line-height:14px;font-size:11.3px;font-weight:normal;color:#000;white-space:pre;">Notes</div>
<div style="left:295px;top:110px;width:706px;height:393px;background:#dcffff"></div>
<div style="left:347px;top:110px;width:1px;height:109px;background:#889898"></div>
<div style="left:486px;top:110px;width:1px;height:109px;background:#889898"></div>
<div style="left:645px;top:110px;width:1px;height:109px;background:#889898"></div>
<div style="left:769px;top:110px;width:1px;height:109px;background:#889898"></div>
<div style="left:883px;top:110px;width:1px;height:109px;background:#889898"></div>
<div style="left:1000px;top:110px;width:1px;height:109px;background:#889898"></div>
<div style="left:295px;top:219px;width:706px;height:2px;background:#6e8a8a"></div>
<div style="left:300px;top:191.50px;line-height:16px;font-size:13px;font-weight:bold;color:#000;white-space:pre;transform:scaleY(1.08);transform-origin:0 12.50px;">Line</div>
<div style="left:336.5px;top:191.50px;line-height:16px;font-size:13px;font-weight:bold;color:#000;white-space:pre;transform:scaleY(1.08);transform-origin:0 12.50px;">v</div>
<div style="left:353px;top:191.50px;line-height:16px;font-size:13px;font-weight:normal;color:#000;white-space:pre;transform:scaleY(1.08);transform-origin:0 12.50px;">Name</div>
<div style="left:491px;top:191.50px;line-height:16px;font-size:13px;font-weight:normal;color:#000;white-space:pre;transform:scaleY(1.08);transform-origin:0 12.50px;">Description</div>
<div style="left:651px;top:111.50px;line-height:16px;font-size:13px;font-weight:normal;color:#000;white-space:pre;transform:scaleY(1.08);transform-origin:0 12.50px;">Begin:</div>
<div style="left:692px;top:111.50px;line-height:16px;font-size:13px;font-weight:normal;color:#000;white-space:pre;transform:scaleY(1.08);transform-origin:0 12.50px;">01 Jan 2013</div>
<div style="left:651px;top:127.50px;line-height:16px;font-size:13px;font-weight:normal;color:#000;white-space:pre;transform:scaleY(1.08);transform-origin:0 12.50px;">End:</div>
<div style="left:694px;top:127.50px;line-height:16px;font-size:13px;font-weight:normal;color:#000;white-space:pre;transform:scaleY(1.08);transform-origin:0 12.50px;">31 Jan 2013</div>
<div style="left:651px;top:143.50px;line-height:16px;font-size:13px;font-weight:normal;color:#000;white-space:pre;transform:scaleY(1.08);transform-origin:0 12.50px;">Index:</div>
<div style="left:690px;top:143.50px;line-height:16px;font-size:13px;font-weight:normal;color:#000;white-space:pre;transform:scaleY(1.08);transform-origin:0 12.50px;">date</div>
<div style="left:651px;top:159.50px;line-height:16px;font-size:13px;font-weight:normal;color:#000;white-space:pre;transform:scaleY(1.08);transform-origin:0 12.50px;">Type:</div>
<div style="left:691px;top:159.50px;line-height:16px;font-size:13px;font-weight:normal;color:#000;white-space:pre;transform:scaleY(1.08);transform-origin:0 12.50px;">amount</div>
<div style="left:651px;top:175.50px;line-height:16px;font-size:13px;font-weight:normal;color:#000;white-space:pre;transform:scaleY(1.08);transform-origin:0 12.50px;">Tag:</div>
<div style="left:692px;top:175.50px;line-height:16px;font-size:13px;font-weight:normal;color:#000;white-space:pre;transform:scaleY(1.08);transform-origin:0 12.50px;">financial</div>
<div style="left:651px;top:191.50px;line-height:16px;font-size:13px;font-weight:normal;color:#000;white-space:pre;transform:scaleY(1.08);transform-origin:0 12.50px;">Nrep:</div>
<div style="left:690px;top:191.50px;line-height:16px;font-size:13px;font-weight:normal;color:#000;white-space:pre;transform:scaleY(1.08);transform-origin:0 12.50px;">yes</div>
<div style="left:295px;top:221px;width:706px;height:19px;background:#c4e2e2"></div>
<div style="left:295px;top:239px;width:706px;height:1px;background:#ffffff"></div>
<div style="left:295px;top:240px;width:706px;height:1px;background:#889898"></div>
<div style="left:295px;top:241px;width:706px;height:19px;background:#f0ffff"></div>
<div style="left:295px;top:259px;width:706px;height:1px;background:#ffffff"></div>
<div style="left:295px;top:260px;width:706px;height:1px;background:#889898"></div>
<div style="left:295px;top:261px;width:706px;height:19px;background:#dcffff"></div>
<div style="left:295px;top:279px;width:706px;height:1px;background:#ffffff"></div>
<div style="left:295px;top:280px;width:706px;height:1px;background:#889898"></div>
<div style="left:295px;top:281px;width:706px;height:19px;background:#f0ffff"></div>
<div style="left:295px;top:299px;width:706px;height:1px;background:#ffffff"></div>
<div style="left:295px;top:300px;width:706px;height:1px;background:#889898"></div>
<div style="left:295px;top:301px;width:706px;height:19px;background:#dcffff"></div>
<div style="left:295px;top:319px;width:706px;height:1px;background:#ffffff"></div>
<div style="left:295px;top:320px;width:706px;height:1px;background:#889898"></div>
<div style="left:295px;top:321px;width:706px;height:19px;background:#f0ffff"></div>
<div style="left:295px;top:339px;width:706px;height:1px;background:#ffffff"></div>
<div style="left:295px;top:340px;width:706px;height:1px;background:#889898"></div>
<div style="left:295px;top:341px;width:706px;height:19px;background:#dcffff"></div>
<div style="left:295px;top:359px;width:706px;height:1px;background:#ffffff"></div>
<div style="left:295px;top:360px;width:706px;height:1px;background:#889898"></div>
<div style="left:295px;top:361px;width:706px;height:19px;background:#f0ffff"></div>
<div style="left:295px;top:379px;width:706px;height:1px;background:#ffffff"></div>
<div style="left:295px;top:380px;width:706px;height:1px;background:#889898"></div>
<div style="left:295px;top:381px;width:706px;height:19px;background:#dcffff"></div>
<div style="left:295px;top:399px;width:706px;height:1px;background:#ffffff"></div>
<div style="left:295px;top:400px;width:706px;height:1px;background:#889898"></div>
<div style="left:295px;top:401px;width:706px;height:19px;background:#f0ffff"></div>
<div style="left:295px;top:419px;width:706px;height:1px;background:#ffffff"></div>
<div style="left:295px;top:420px;width:706px;height:1px;background:#889898"></div>
<div style="left:295px;top:421px;width:706px;height:19px;background:#dcffff"></div>
<div style="left:295px;top:439px;width:706px;height:1px;background:#ffffff"></div>
<div style="left:295px;top:440px;width:706px;height:1px;background:#889898"></div>
<div style="left:295px;top:441px;width:706px;height:19px;background:#f0ffff"></div>
<div style="left:295px;top:459px;width:706px;height:1px;background:#ffffff"></div>
<div style="left:295px;top:460px;width:706px;height:1px;background:#889898"></div>
<div style="left:295px;top:461px;width:706px;height:19px;background:#dcffff"></div>
<div style="left:295px;top:479px;width:706px;height:1px;background:#ffffff"></div>
<div style="left:295px;top:480px;width:706px;height:1px;background:#889898"></div>
<div style="left:295px;top:481px;width:706px;height:19px;background:#f0ffff"></div>
<div style="left:295px;top:499px;width:706px;height:1px;background:#ffffff"></div>
<div style="left:295px;top:500px;width:706px;height:1px;background:#889898"></div>
<div style="left:295px;top:501px;width:706px;height:2px;background:#dcffff"></div>
<div style="left:347px;top:221px;width:1px;height:282px;background:#ffffff"></div>
<div style="left:348px;top:221px;width:1px;height:282px;background:#889898"></div>
<div style="left:486px;top:221px;width:1px;height:282px;background:#ffffff"></div>
<div style="left:487px;top:221px;width:1px;height:282px;background:#889898"></div>
<div style="left:645px;top:221px;width:1px;height:282px;background:#ffffff"></div>
<div style="left:646px;top:221px;width:1px;height:282px;background:#889898"></div>
<div style="left:769px;top:221px;width:1px;height:282px;background:#ffffff"></div>
<div style="left:770px;top:221px;width:1px;height:282px;background:#889898"></div>
<div style="left:883px;top:221px;width:1px;height:282px;background:#ffffff"></div>
<div style="left:884px;top:221px;width:1px;height:282px;background:#889898"></div>
<div style="left:1000px;top:221px;width:1px;height:282px;background:#889898"></div>
<div style="left:295px;top:221px;width:53px;height:19px;background:#ffff00"></div>
<div style="left:296px;top:222.50px;line-height:16px;font-size:13px;font-weight:normal;color:#000;white-space:pre;transform:scaleY(1.08);transform-origin:0 12.50px;">1</div>
<div style="left:488px;top:222.50px;line-height:16px;font-size:13px;font-weight:normal;color:#000;white-space:pre;transform:scaleY(1.08);transform-origin:0 12.50px;">-- MARKET RENT --</div>
<div style="left:296px;top:242.50px;line-height:16px;font-size:13px;font-weight:normal;color:#000;white-space:pre;transform:scaleY(1.08);transform-origin:0 12.50px;">2</div>
<div style="left:349px;top:242.50px;line-height:16px;font-size:13px;font-weight:normal;color:#000;white-space:pre;transform:scaleY(1.08);transform-origin:0 12.50px;">101.RENT</div>
<div style="left:488px;top:242.50px;line-height:16px;font-size:13px;font-weight:normal;color:#000;white-space:pre;transform:scaleY(1.08);transform-origin:0 12.50px;">101 Market Rent</div>
<div style="left:461px;width:300px;text-align:right;top:242.50px;line-height:16px;font-size:13px;font-weight:normal;color:#000;white-space:pre;transform:scaleY(1.08);transform-origin:0 12.50px;">0.00</div>
<div style="left:296px;top:262.50px;line-height:16px;font-size:13px;font-weight:normal;color:#000;white-space:pre;transform:scaleY(1.08);transform-origin:0 12.50px;">3</div>
<div style="left:349px;top:262.50px;line-height:16px;font-size:13px;font-weight:normal;color:#000;white-space:pre;transform:scaleY(1.08);transform-origin:0 12.50px;">102.RENT</div>
<div style="left:488px;top:262.50px;line-height:16px;font-size:13px;font-weight:normal;color:#000;white-space:pre;transform:scaleY(1.08);transform-origin:0 12.50px;">102 Market Rent</div>
<div style="left:461px;width:300px;text-align:right;top:262.50px;line-height:16px;font-size:13px;font-weight:normal;color:#000;white-space:pre;transform:scaleY(1.08);transform-origin:0 12.50px;">1,018.00</div>
<div style="left:296px;top:282.50px;line-height:16px;font-size:13px;font-weight:normal;color:#000;white-space:pre;transform:scaleY(1.08);transform-origin:0 12.50px;">4</div>
<div style="left:349px;top:282.50px;line-height:16px;font-size:13px;font-weight:normal;color:#000;white-space:pre;transform:scaleY(1.08);transform-origin:0 12.50px;">103.RENT</div>
<div style="left:488px;top:282.50px;line-height:16px;font-size:13px;font-weight:normal;color:#000;white-space:pre;transform:scaleY(1.08);transform-origin:0 12.50px;">103 Market Rent</div>
<div style="left:461px;width:300px;text-align:right;top:282.50px;line-height:16px;font-size:13px;font-weight:normal;color:#000;white-space:pre;transform:scaleY(1.08);transform-origin:0 12.50px;">0.00</div>
<div style="left:296px;top:302.50px;line-height:16px;font-size:13px;font-weight:normal;color:#000;white-space:pre;transform:scaleY(1.08);transform-origin:0 12.50px;">5</div>
<div style="left:349px;top:302.50px;line-height:16px;font-size:13px;font-weight:normal;color:#000;white-space:pre;transform:scaleY(1.08);transform-origin:0 12.50px;">104.RENT</div>
<div style="left:488px;top:302.50px;line-height:16px;font-size:13px;font-weight:normal;color:#000;white-space:pre;transform:scaleY(1.08);transform-origin:0 12.50px;">104 Market Rent</div>
<div style="left:461px;width:300px;text-align:right;top:302.50px;line-height:16px;font-size:13px;font-weight:normal;color:#000;white-space:pre;transform:scaleY(1.08);transform-origin:0 12.50px;">1,018.00</div>
<div style="left:296px;top:322.50px;line-height:16px;font-size:13px;font-weight:normal;color:#000;white-space:pre;transform:scaleY(1.08);transform-origin:0 12.50px;">6</div>
<div style="left:349px;top:322.50px;line-height:16px;font-size:13px;font-weight:normal;color:#000;white-space:pre;transform:scaleY(1.08);transform-origin:0 12.50px;">105.RENT</div>
<div style="left:488px;top:322.50px;line-height:16px;font-size:13px;font-weight:normal;color:#000;white-space:pre;transform:scaleY(1.08);transform-origin:0 12.50px;">105 Market Rent</div>
<div style="left:461px;width:300px;text-align:right;top:322.50px;line-height:16px;font-size:13px;font-weight:normal;color:#000;white-space:pre;transform:scaleY(1.08);transform-origin:0 12.50px;">0.00</div>
<div style="left:296px;top:342.50px;line-height:16px;font-size:13px;font-weight:normal;color:#000;white-space:pre;transform:scaleY(1.08);transform-origin:0 12.50px;">7</div>
<div style="left:349px;top:342.50px;line-height:16px;font-size:13px;font-weight:normal;color:#000;white-space:pre;transform:scaleY(1.08);transform-origin:0 12.50px;">106.RENT</div>
<div style="left:488px;top:342.50px;line-height:16px;font-size:13px;font-weight:normal;color:#000;white-space:pre;transform:scaleY(1.08);transform-origin:0 12.50px;">106 Market Rent</div>
<div style="left:461px;width:300px;text-align:right;top:342.50px;line-height:16px;font-size:13px;font-weight:normal;color:#000;white-space:pre;transform:scaleY(1.08);transform-origin:0 12.50px;">0.00</div>
<div style="left:296px;top:362.50px;line-height:16px;font-size:13px;font-weight:normal;color:#000;white-space:pre;transform:scaleY(1.08);transform-origin:0 12.50px;">8</div>
<div style="left:349px;top:362.50px;line-height:16px;font-size:13px;font-weight:normal;color:#000;white-space:pre;transform:scaleY(1.08);transform-origin:0 12.50px;">107.RENT</div>
<div style="left:488px;top:362.50px;line-height:16px;font-size:13px;font-weight:normal;color:#000;white-space:pre;transform:scaleY(1.08);transform-origin:0 12.50px;">107 Market Rent</div>
<div style="left:461px;width:300px;text-align:right;top:362.50px;line-height:16px;font-size:13px;font-weight:normal;color:#000;white-space:pre;transform:scaleY(1.08);transform-origin:0 12.50px;">1,188.00</div>
<div style="left:296px;top:382.50px;line-height:16px;font-size:13px;font-weight:normal;color:#000;white-space:pre;transform:scaleY(1.08);transform-origin:0 12.50px;">9</div>
<div style="left:349px;top:382.50px;line-height:16px;font-size:13px;font-weight:normal;color:#000;white-space:pre;transform:scaleY(1.08);transform-origin:0 12.50px;">108.RENT</div>
<div style="left:488px;top:382.50px;line-height:16px;font-size:13px;font-weight:normal;color:#000;white-space:pre;transform:scaleY(1.08);transform-origin:0 12.50px;">108 Market Rent</div>
<div style="left:461px;width:300px;text-align:right;top:382.50px;line-height:16px;font-size:13px;font-weight:normal;color:#000;white-space:pre;transform:scaleY(1.08);transform-origin:0 12.50px;">0.00</div>
<div style="left:296px;top:402.50px;line-height:16px;font-size:13px;font-weight:normal;color:#000;white-space:pre;transform:scaleY(1.08);transform-origin:0 12.50px;">10</div>
<div style="left:349px;top:402.50px;line-height:16px;font-size:13px;font-weight:normal;color:#000;white-space:pre;transform:scaleY(1.08);transform-origin:0 12.50px;">109.RENT</div>
<div style="left:488px;top:402.50px;line-height:16px;font-size:13px;font-weight:normal;color:#000;white-space:pre;transform:scaleY(1.08);transform-origin:0 12.50px;">109 Market Rent</div>
<div style="left:461px;width:300px;text-align:right;top:402.50px;line-height:16px;font-size:13px;font-weight:normal;color:#000;white-space:pre;transform:scaleY(1.08);transform-origin:0 12.50px;">0.00</div>
<div style="left:296px;top:422.50px;line-height:16px;font-size:13px;font-weight:normal;color:#000;white-space:pre;transform:scaleY(1.08);transform-origin:0 12.50px;">11</div>
<div style="left:349px;top:422.50px;line-height:16px;font-size:13px;font-weight:normal;color:#000;white-space:pre;transform:scaleY(1.08);transform-origin:0 12.50px;">110.RENT</div>
<div style="left:488px;top:422.50px;line-height:16px;font-size:13px;font-weight:normal;color:#000;white-space:pre;transform:scaleY(1.08);transform-origin:0 12.50px;">110 Market Rent</div>
<div style="left:461px;width:300px;text-align:right;top:422.50px;line-height:16px;font-size:13px;font-weight:normal;color:#000;white-space:pre;transform:scaleY(1.08);transform-origin:0 12.50px;">0.00</div>
<div style="left:296px;top:442.50px;line-height:16px;font-size:13px;font-weight:normal;color:#000;white-space:pre;transform:scaleY(1.08);transform-origin:0 12.50px;">12</div>
<div style="left:349px;top:442.50px;line-height:16px;font-size:13px;font-weight:normal;color:#000;white-space:pre;transform:scaleY(1.08);transform-origin:0 12.50px;">201.RENT</div>
<div style="left:488px;top:442.50px;line-height:16px;font-size:13px;font-weight:normal;color:#000;white-space:pre;transform:scaleY(1.08);transform-origin:0 12.50px;">201 Market Rent</div>
<div style="left:461px;width:300px;text-align:right;top:442.50px;line-height:16px;font-size:13px;font-weight:normal;color:#000;white-space:pre;transform:scaleY(1.08);transform-origin:0 12.50px;">0.00</div>
<div style="left:296px;top:462.50px;line-height:16px;font-size:13px;font-weight:normal;color:#000;white-space:pre;transform:scaleY(1.08);transform-origin:0 12.50px;">13</div>
<div style="left:349px;top:462.50px;line-height:16px;font-size:13px;font-weight:normal;color:#000;white-space:pre;transform:scaleY(1.08);transform-origin:0 12.50px;">202.RENT</div>
<div style="left:488px;top:462.50px;line-height:16px;font-size:13px;font-weight:normal;color:#000;white-space:pre;transform:scaleY(1.08);transform-origin:0 12.50px;">202 Market Rent</div>
<div style="left:461px;width:300px;text-align:right;top:462.50px;line-height:16px;font-size:13px;font-weight:normal;color:#000;white-space:pre;transform:scaleY(1.08);transform-origin:0 12.50px;">0.00</div>
<div style="left:296px;top:482.50px;line-height:16px;font-size:13px;font-weight:normal;color:#000;white-space:pre;transform:scaleY(1.08);transform-origin:0 12.50px;">14</div>
<div style="left:349px;top:482.50px;line-height:16px;font-size:13px;font-weight:normal;color:#000;white-space:pre;transform:scaleY(1.08);transform-origin:0 12.50px;">203.RENT</div>
<div style="left:488px;top:482.50px;line-height:16px;font-size:13px;font-weight:normal;color:#000;white-space:pre;transform:scaleY(1.08);transform-origin:0 12.50px;">203 Market Rent</div>
<div style="left:461px;width:300px;text-align:right;top:482.50px;line-height:16px;font-size:13px;font-weight:normal;color:#000;white-space:pre;transform:scaleY(1.08);transform-origin:0 12.50px;">0.00</div>
<div style="left:1001px;top:110px;width:18px;height:393px;background-color:#fff;background-image:repeating-conic-gradient(#d4d0c8 0 25%, #ffffff 0 50%);background-size:2px 2px"></div>
<div style="left:1001px;top:110px;width:18px;height:16px;background:#d4d0c8;box-shadow:inset -1px -1px #404040, inset 1px 1px #ffffff, inset -2px -2px #808080, inset 2px 2px #d4d0c8;"></div>
<svg style="position:absolute;left:1001px;top:110px;" width="18" height="16" viewBox="0 0 18 16"><path d="M5 10 L13 10 L9 6 Z" fill="#000"/></svg>
<div style="left:1001px;top:126px;width:18px;height:135px;background:#d4d0c8;box-shadow:inset -1px -1px #404040, inset 1px 1px #ffffff, inset -2px -2px #808080, inset 2px 2px #d4d0c8;"></div>
<svg style="position:absolute;left:0px;top:0px;pointer-events:none" width="1025" height="527" viewBox="0 0 1025 527"><rect x="303.8" y="73.4" width="318.7" height="19.2" rx="28" ry="9.6" fill="none" stroke="#ff0000" stroke-width="3"/>
<rect x="87.9" y="260.2" width="184" height="17.2" rx="26" ry="8.6" fill="none" stroke="#ff0000" stroke-width="3"/>
<rect x="115" y="275" width="143" height="1" fill="#700000"/>
<path d="M625.5 486 L665.5 486 L645.5 526.5 Z" fill="#ff0000"/></svg>
</body></html>
